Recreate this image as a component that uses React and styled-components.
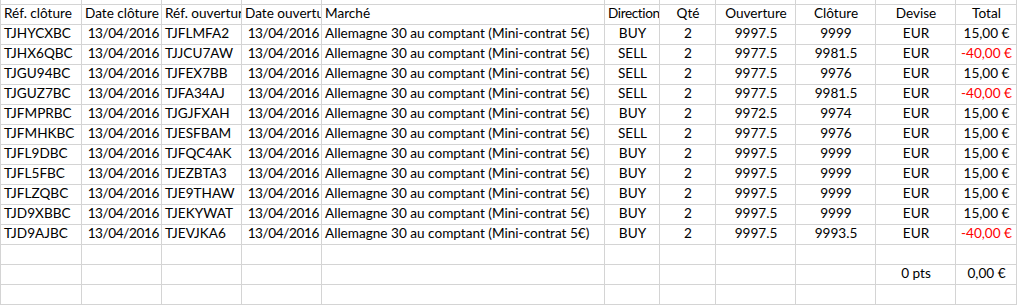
import React from "react";
import styled, { createGlobalStyle } from "styled-components";

const Global = createGlobalStyle`
  html, body { margin: 0; padding: 0; background: #ffffff; }
  body { font-family: Lato, "Open Sans", sans-serif; }
`;

const COLS = [81, 80, 80, 80, 283, 55, 56, 80, 80, 80, 61];
const LINE = "#d4d4d4";

const Sheet = styled.div`
  display: grid;
  grid-template-columns: ${COLS.map((w) => `${w}px`).join(" ")};
  width: 1018px;
  border-left: 1px solid ${LINE};
  box-sizing: border-box;
  overflow: hidden;
  font-family: Lato, "Open Sans", sans-serif;
  font-size: 13.6px;
  color: #000000;
`;

const Cell = styled.div`
  box-sizing: border-box;
  height: ${(p) => (p.$stub ? 5 : 20)}px;
  border-right: 1px solid ${LINE};
  border-bottom: 1px solid ${LINE};
  overflow: hidden;
  white-space: nowrap;
  display: flex;
  align-items: flex-end;
  justify-content: ${(p) =>
    p.$align === "right" ? "flex-end" : p.$align === "center" ? "center" : "flex-start"};
  padding: 0 2px 2px 3px;
  line-height: 17px;
  letter-spacing: ${(p) => (p.$tight ? "-0.4px" : "0")};
  color: ${(p) => (p.$neg ? "#ff0000" : "#000000")};
`;

const header = [
  ["Réf. clôture", "left"],
  ["Date clôture", "left"],
  ["Réf. ouverture", "left"],
  ["Date ouverture", "left"],
  ["Marché", "left"],
  ["Direction", "left"],
  ["Qté", "center"],
  ["Ouverture", "center"],
  ["Clôture", "center"],
  ["Devise", "center"],
  ["Total", "center"],
];

const rows = [
  ["TJHYCXBC", "TJFLMFA2", "BUY", "9997.5", "9999", "15,00 €"],
  ["TJHX6QBC", "TJJCU7AW", "SELL", "9977.5", "9981.5", "-40,00 €"],
  ["TJGU94BC", "TJFEX7BB", "SELL", "9977.5", "9976", "15,00 €"],
  ["TJGUZ7BC", "TJFA34AJ", "SELL", "9977.5", "9981.5", "-40,00 €"],
  ["TJFMPRBC", "TJGJFXAH", "BUY", "9972.5", "9974", "15,00 €"],
  ["TJFMHKBC", "TJESFBAM", "SELL", "9977.5", "9976", "15,00 €"],
  ["TJFL9DBC", "TJFQC4AK", "BUY", "9997.5", "9999", "15,00 €"],
  ["TJFL5FBC", "TJEZBTA3", "BUY", "9997.5", "9999", "15,00 €"],
  ["TJFLZQBC", "TJE9THAW", "BUY", "9997.5", "9999", "15,00 €"],
  ["TJD9XBBC", "TJEKYWAT", "BUY", "9997.5", "9999", "15,00 €"],
  ["TJD9AJBC", "TJEVJKA6", "BUY", "9997.5", "9993.5", "-40,00 €"],
];

const DATE = "13/04/2016";
const MARKET = "Allemagne 30 au comptant (Mini-contrat 5€)";

function DataRow({ r }) {
  const [refC, refO, dir, open, close, total] = r;
  const neg = total.startsWith("-");
  return (
    <>
      <Cell>{refC}</Cell>
      <Cell $align="right" $tight>{DATE}</Cell>
      <Cell>{refO}</Cell>
      <Cell $align="right" $tight>{DATE}</Cell>
      <Cell>{MARKET}</Cell>
      <Cell $align="center">{dir}</Cell>
      <Cell $align="center">2</Cell>
      <Cell $align="center">{open}</Cell>
      <Cell $align="center">{close}</Cell>
      <Cell $align="center">EUR</Cell>
      <Cell $align="center" $neg={neg}>{total}</Cell>
    </>
  );
}

function EmptyRow() {
  return COLS.map((_, i) => <Cell key={i} />);
}

export default function App() {
  return (
    <>
      <Global />
      <Sheet>
        {COLS.map((_, i) => (
          <Cell key={"s" + i} $stub />
        ))}
        {header.map(([t, a], i) => (
          <Cell key={"h" + i} $align={a} $tight={t === "Direction"}>
            {t}
          </Cell>
        ))}
        {rows.map((r, i) => (
          <DataRow key={i} r={r} />
        ))}
        <EmptyRow />
        {COLS.slice(0, 9).map((_, i) => (
          <Cell key={"t" + i} />
        ))}
        <Cell $align="center">0 pts</Cell>
        <Cell $align="center">0,00 €</Cell>
        <EmptyRow />
      </Sheet>
    </>
  );
}
